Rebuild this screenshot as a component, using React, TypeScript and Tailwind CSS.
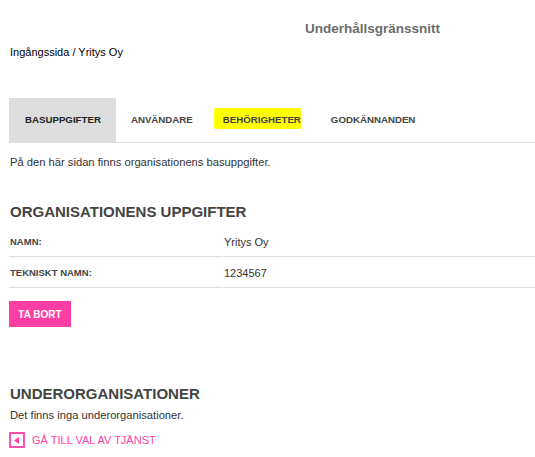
import React from "react";

export default function App() {
  const tabs = ["BASUPPGIFTER", "ANVÄNDARE", "BEHÖRIGHETER", "GODKÄNNANDEN"];
  return (
    <div
      className="w-[535px] h-[457px] bg-white overflow-hidden text-[#333]"
      style={{ fontFamily: '"Liberation Sans", Arial, sans-serif' }}
    >
      <div className="pl-[305px] pt-[21px] text-[13.5px] leading-[16px] font-bold text-[#6d6d6d]">
        Underhållsgränssnitt
      </div>
      <div className="pl-[10px] mt-[9px] text-[11px] leading-[13px] text-black">
        Ingångssida / Yritys Oy
      </div>

      <div className="pl-[9px]">
        <div className="mt-[39px] flex h-[45px] border-b border-[#dddddd]">
          {tabs.map((t, i) => (
            <div
              key={t}
              className={
                "h-[44px] px-[15px] flex items-center text-[9.7px] font-bold leading-[12px] " +
                (i === 0 ? "bg-[#dddddd] text-[#222] pl-[16px]" : "text-[#444]")
              }
            >
              {i === 2 ? (
                <span className="relative">
                  <span className="absolute left-[-9px] right-[0px] top-[-6px] bottom-[-3px] bg-[#ffff00] rounded-[2px]" />
                  <span className="relative">{t}</span>
                </span>
              ) : (
                t
              )}
            </div>
          ))}
        </div>

        <p className="mt-[13px] pl-[1px] text-[11.2px] leading-[13px] text-[#333]">
          På den här sidan finns organisationens basuppgifter.
        </p>

        <h2 className="mt-[34px] pl-[1px] text-[15px] leading-[18px] font-bold text-[#444]">
          ORGANISATIONENS UPPGIFTER
        </h2>

        <div className="mt-[5px] grid grid-cols-[213px_1fr] gap-x-[1px]">
          <div className="h-[31px] border-b border-[#dddddd] flex items-center pt-[2px] pl-[1px] text-[9.5px] font-bold text-[#444]">
            NAMN:
          </div>
          <div className="h-[31px] border-b border-[#dddddd] flex items-center pt-[2px] pl-[1px] text-[11px] text-[#333]">
            Yritys Oy
          </div>
          <div className="h-[31px] border-b border-[#dddddd] flex items-center pt-[2px] pl-[1px] text-[9.5px] font-bold text-[#444]">
            TEKNISKT NAMN:
          </div>
          <div className="h-[31px] border-b border-[#dddddd] flex items-center pt-[2px] pl-[1px] text-[11px] text-[#333]">
            1234567
          </div>
        </div>

        <button className="mt-[13px] w-[62px] h-[26px] bg-[#ff3ea5] text-white text-[10px] font-bold flex items-center justify-center">
          TA BORT
        </button>

        <h2 className="mt-[58px] pl-[1px] text-[15px] leading-[18px] font-bold text-[#444]">
          UNDERORGANISATIONER
        </h2>
        <p className="mt-[6px] pl-[1px] text-[11.2px] leading-[13px] text-[#333]">
          Det finns inga underorganisationer.
        </p>

        <div className="mt-[10px] flex items-center gap-[7px]">
          <div className="w-[16px] h-[16px] border-2 border-[#ff4fb0] flex items-center justify-center">
            <svg width="6" height="7" viewBox="0 0 6 7">
              <polygon points="5,0 5,7 0,3.5" fill="#ff3ea5" />
            </svg>
          </div>
          <span className="text-[11px] leading-[13px] text-[#ff3ea5]">GÅ TILL VAL AV TJÄNST</span>
        </div>
      </div>
    </div>
  );
}
